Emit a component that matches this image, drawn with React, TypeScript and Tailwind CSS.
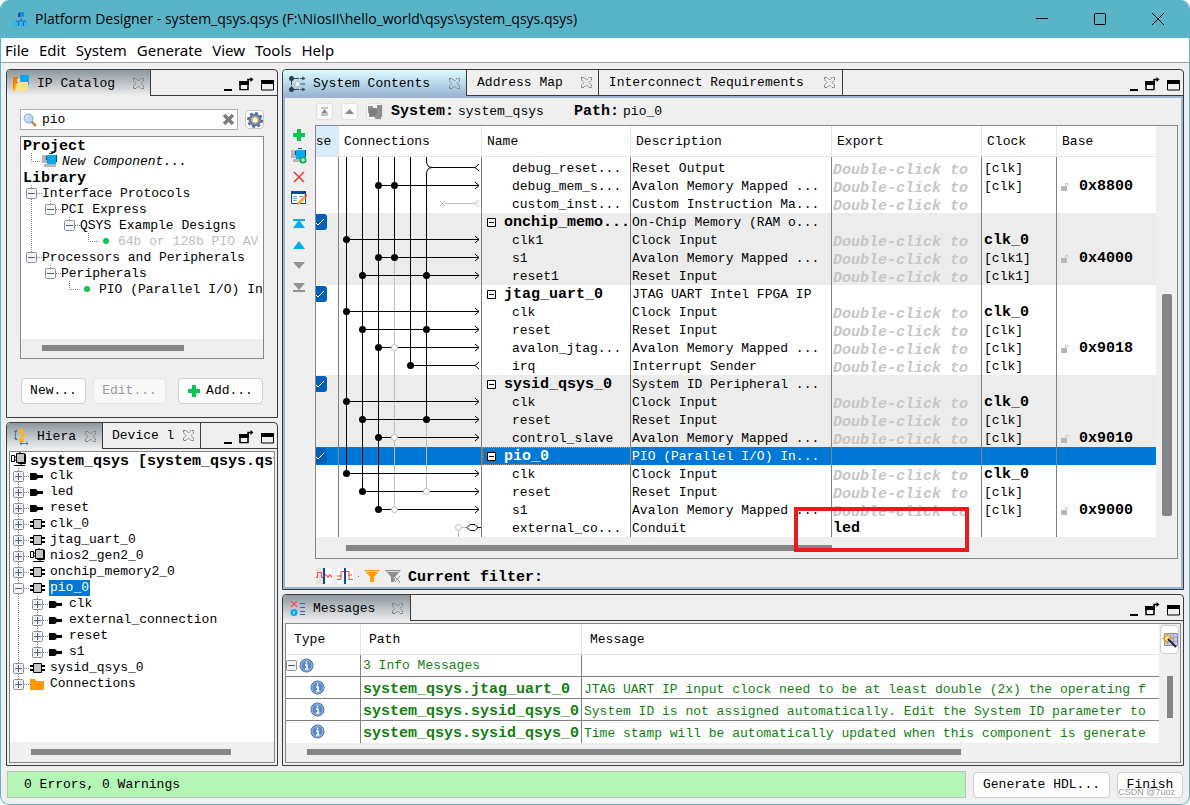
import { useState } from "react";
import type { ReactNode } from "react";
import clsx from "clsx";

/* ---------- icons ---------- */

const Svg = ({ w = 16, h = 16, children }: { w?: number; h?: number; children: ReactNode }) => (
    <svg width={w} height={h} viewBox={`0 0 ${w} ${h}`} fill="none" className="block shrink-0" aria-hidden="true">
        {children}
    </svg>
)

const AppIcon = () => (
    <Svg>
        <path d="M8 7v3M3.500 12v-2h9v2" stroke="#1565c0" />
        <path d="M6 1h5v5H6z" fill="#1e88e5" />
        <path d="M5 3l2-2v5H5z" fill="#0d47a1" />
        <path d="M1 11h4v4H1zM7 11h3v4H7zM12 11h3v4h-3z" fill="#29b6f6" />
        <path d="M5 11h1v4H5zM10 11h1v4h-1z" fill="#1565c0" />
    </Svg>
)

const CatalogIcon = () => (
    <Svg w={17} h={17}>
        <path d="M0 2h5v12H0z" fill="#f57c00" />
        <path d="M4 4l3-1 1 5-3 1z" fill="#e0e0e0" />
        <path d="M7 0h9v10H7z" fill="#03a9f4" />
        <path d="M2 8h4l1-1h8v9H1z" fill="#ffe08a" />
        <path d="M0 16l2-8h2L2 16z" fill="#ffb300" />
    </Svg>
)

const HierIcon = () => (
    <Svg>
        <path d="M3.500 1.500h-2v9h2M0 3l1.500-1.500L3 3M0 9l1.500 1.500L3 9" stroke="#5c7a99" />
        <path d="M5 0h4v4H5zM7 4h4v4H7zM5 9h5v4H5z" fill="#f9b515" />
        <path d="M6 14.500h8M8 12.500l-2 2 2 1.500M12 12.500l2 2-2 1.500" stroke="#5c7a99" />
    </Svg>
)

const SystemIcon = () => (
    <Svg w={17}>
        <path d="M2.500 2v12M3 2.500h13M3 13.500h13M11 8h5" stroke="#34495e" strokeDasharray="7 1" />
        <path d="M8.500 3v10" stroke="#b0bccb" />
        <circle cx="2.500" cy="2.500" r="2.500" fill="#2c3e50" />
        <circle cx="2.500" cy="13.500" r="2.500" fill="#2c3e50" />
        <circle cx="8.500" cy="8" r="2.500" fill="#fff" stroke="#b0bccb" />
        <path d="M13 1l3 1.500-3 1.500M13 12l3 1.500-3 1.500" stroke="#34495e" />
    </Svg>
)

const MessagesIcon = () => (
    <Svg>
        <path d="M1 0l6 6M7 0L1 6" stroke="#ef5350" strokeWidth="1.200" />
        <circle cx="4" cy="11.500" r="3.500" fill="#03a9f4" />
        <path d="M4 10v3" stroke="#fff" />
        <path d="M10 2.500h5M10 6.500h5M10 10.500h5M10 13.500h5" stroke="#3f5fa8" />
    </Svg>
)

const TabClose = () => (
    <Svg w={11} h={11}>
        <path
            d="M.5 .5h2.500l2.500 2.500L8 .5h2.500V3L8 5.500l2.500 2.500v2.500H8L5.500 8 3 10.500H.5V8L3 5.500.5 3z"
            stroke="#777"
            strokeDasharray="2 .6"
        />
    </Svg>
)

const FloatIcon = () => (
    <Svg w={15} h={14}>
        <path d="M0 4h10v4H0z" fill="#000" />
        <path d="M1 5h8v7.500H1z" stroke="#000" strokeWidth="1.500" />
        <path d="M2 8h6v4H2z" fill="#efefef" />
        <path d="M9 5V2.500h4" stroke="#000" strokeWidth="1.500" />
        <path d="M11.500 0l3 2.500-3 2.500z" fill="#000" />
    </Svg>
)

const MaxIcon = () => (
    <Svg w={13} h={11}>
        <path d="M.5 1h12v9H.5z" stroke="#000" />
        <path d="M0 0h13v4H0z" fill="#000" />
    </Svg>
)

const SearchIcon = () => (
    <Svg w={14} h={14}>
        <path d="M8 8l5 5" stroke="#c98b4a" strokeWidth="2.500" />
        <circle cx="5.500" cy="5.500" r="4.500" fill="#bcd9f5" stroke="#7fa8d6" />
        <path d="M3 5.500C3 4 4 3 5.500 3" stroke="#fff" />
    </Svg>
)

const GearIcon = () => (
    <Svg>
        <circle cx="8" cy="8" r="5" stroke="#5f7fa8" strokeWidth="3" />
        <circle cx="8" cy="8" r="7" stroke="#4f6d94" strokeWidth="2" strokeDasharray="2.800 2.700" />
        <circle cx="8" cy="8" r="3" fill="#fff" stroke="#f0a030" />
    </Svg>
)

const PlusIcon = () => (
    <Svg w={12} h={12}>
        <path d="M4 0h4v4h4v4H8v4H4V8H0V4h4z" fill="#0bc552" />
    </Svg>
)

const AddComponentIcon = ({ plain = false }: { plain?: boolean }) => (
    <Svg>
        <path d="M0 2h6v8H0zM2 11h12v3H2z" fill="#b5b5b5" />
        <path d="M5 2h9v9H5z" fill="#03a9f4" />
        <path d="M4.500 3v4M7 .5h4M14.500 2v7" stroke="#0d47a1" />
        {!plain && <circle cx="12" cy="12" r="3.500" fill="#0bb04f" />}
        {!plain && <path d="M12 10v4M10 12h4" stroke="#fff" />}
    </Svg>
)

const EditIcon = () => (
    <Svg>
        <path d="M.5 1.500h14v12H.5z" fill="#fff" stroke="#0d47a1" />
        <path d="M0 1h15v3H0z" fill="#0d47a1" />
        <path d="M2 6.500h4M2 8.500h4M2 10.500h4M8 6.500h4" stroke="#64a5e8" />
        <path d="M7 12l6-6 2 2-6 6-3 1z" fill="#f9a825" />
        <path d="M13 5l2-1 1 1-1 3z" fill="#e53935" />
    </Svg>
)

const Arrow = ({ color, down = false, bar = false }: { color: string; down?: boolean; bar?: boolean }) => (
    <Svg w={12} h={10}>
        <path d={down ? "M0 1h12L6 8z" : "M6 1l6 8H0z"} fill={color} />
        {bar && <path d={down ? "M0 9h12" : "M0 1h12"} stroke={color} strokeWidth="2" />}
    </Svg>
)

const SystemGray = () => (
    <Svg>
        <path d="M1 2h5v2h4V1h5v12h-1v2H9l-2-2H2V9H1z" fill="#8f8f8f" />
        <circle cx="6" cy="8" r="4" fill="#7d7d7d" />
    </Svg>
)

const Plug = () => (
    <Svg w={13} h={16}>
        <path d="M0 5h6l2 2h5v3H8l-2 2H0z" fill="#000" />
    </Svg>
)

const Chip = () => (
    <Svg w={15}>
        <path d="M0 5h4v2H0zM0 9h4v2H0zM11 5h4v2h-4zM11 9h4v2h-4z" fill="#000" />
        <path d="M3.500 3.500h8v9h-8z" fill="#c4c4c4" stroke="#000" />
    </Svg>
)

const Subsystem = () => (
    <Svg w={15}>
        <path d="M5.500 1.500h8v9h-8z" fill="#c4c4c4" stroke="#000" />
        <path d="M.5 3.500h3v6h-3zM4 5h1M4 8h1M14.500 2v9.500H7M10 11v2M3 13.500h11M9 0v2" stroke="#000" />
    </Svg>
)

const Folder = () => (
    <Svg w={15}>
        <path d="M0 3h5l1 2h8v9H0z" fill="#ff9800" />
    </Svg>
)

const Dot = () => (
    <Svg w={11}>
        <circle cx="7" cy="8" r="3" fill="#0bc552" />
    </Svg>
)

const InfoIcon = () => (
    <Svg w={15} h={15}>
        <circle cx="7.500" cy="7.500" r="6.500" fill="#5b87c4" stroke="#3f69a8" />
        <circle cx="7.500" cy="7.500" r="5.500" stroke="#a9c2e4" />
        <path d="M7.500 3.500v2M6 7h2v4M6 11h3.500" stroke="#fff" strokeWidth="1.500" />
    </Svg>
)

const LockIcon = () => (
    <Svg w={10} h={10}>
        <path d="M1 4h6v5H1z" fill="#b8b8b8" />
        <path d="M5.500 4V1.500h2.500V4" stroke="#c8c8c8" />
    </Svg>
)

const Wave = ({ kind }: { kind: "one" | "two" }) => (
    <Svg>
        <path d="M0 0h16v16H0z" fill={kind === "one" ? "#e3e3df" : "#fff"} />
        {kind === "one" && <path d="M9 0h7v16H9z" fill="#fff" />}
        <path
            d={kind === "one" ? "M0 9.500h1.500v-5h4v5H8M9 7h2v2h2V7h2v2h1" : "M0 11.500h4v-8h3M0 8h5M9 3.500h3v8h4M11 7h4"}
            stroke="#f44336"
        />
        <path d="M8 0v16" stroke="#0d47a1" strokeWidth="2" />
    </Svg>
)

const Funnel = ({ color, off = false }: { color: string; off?: boolean }) => (
    <Svg>
        <path d="M0 2h16l-6 7v5H6V9z" fill={color} />
        <path d="M2 3.500h12" stroke="#d8d8d8" />
        {off && <path d="M9 9l6 5M15 7l-6 7" stroke="#efefef" />}
        {off && <path d="M10 9l5 5M15 8l-5 6" stroke="#8f8f8f" />}
    </Svg>
)

const WandIcon = () => (
    <Svg>
        <path d="M2.500 1.500h13v12h-13z" fill="#c9cbe8" stroke="#8388b5" />
        <path d="M3 5.500h12M3 9.500h12M11.500 2v11" stroke="#9a9dc4" />
        <path d="M5.500 1v11M.5 6.500h10M2 3l7 7M9 3l-7 7" stroke="#d99513" strokeWidth="1.500" />
        <circle cx="5.500" cy="6.500" r="2.500" fill="#ffe27a" />
        <path d="M6 7l8 8" stroke="#222" strokeWidth="2" />
    </Svg>
)

/* ---------- panel frame ---------- */

type Tab = { label: string; icon?: ReactNode; tone?: "blue" | "gray"; pad?: string }

function Tabs({ tabs, name }: { tabs: Tab[]; name: string }) {
    return (
        <div className="flex h-[26px] shrink-0">
            {tabs.map((tab) => (
                <div
                    key={tab.label}
                    className={clsx(
                        "flex items-center border-r border-[#3c3c3c]",
                        tab.pad,
                        !tab.tone && "border-b",
                        tab.tone === "blue" && "rounded-tl bg-linear-to-b from-[#dcfdff] to-[#9ab6d4]",
                        tab.tone === "gray" && "rounded-tl bg-linear-to-b from-[#8d979f] to-[#efefef]"
                    )}
                >
                    <button type="button" className="flex items-center gap-[7px] pt-px">
                        {tab.icon}
                        {tab.label}
                    </button>
                    <button type="button" aria-label={`Close ${tab.label}`}>
                        <TabClose />
                    </button>
                </div>
            ))}
            <div className="flex flex-1 items-end justify-end gap-[7px] border-b border-[#3c3c3c] pr-[3px] pb-1">
                <button type="button" aria-label={`Minimize ${name}`} className="h-[2px] w-2 bg-black" />
                <button type="button" aria-label={`Float ${name}`}>
                    <FloatIcon />
                </button>
                <button type="button" aria-label={`Maximize ${name}`}>
                    <MaxIcon />
                </button>
            </div>
        </div>
    )
}

/* ---------- trees ---------- */

// one character per 19px level: "|" line, "L" corner, "+" / "-" expander, "." empty
function Guides({ spec, last }: { spec: string; last?: boolean }) {
    return (
        <>
            {spec.split("").map((c, i) => {
                const box = c === "+" || c === "-"
                const end = i === spec.length - 1 && last
                return (
                    <svg key={i} width="19" height="16" viewBox="0 0 19 16" fill="none" className="block shrink-0" aria-hidden="true">
                        {c === "|" && <path d="M8.500 0v16" stroke="#808080" strokeDasharray="1 1" />}
                        {c === "L" && <path d="M8.500 0v8.500h10" stroke="#808080" strokeDasharray="1 1" />}
                        {box && <path d={end ? "M8.500 0v8" : "M8.500 0v16"} stroke="#808080" strokeDasharray="1 1" />}
                        {box && <path d="M14 8.500h5" stroke="#808080" strokeDasharray="1 1" />}
                        {box && <rect x="3.500" y="3.500" width="10" height="10" rx="1" fill="#f4f4f4" stroke="#919191" />}
                        {box && <path d={c === "+" ? "M5 8.500h7M8.500 5v7" : "M5 8.500h7"} stroke="#3f5fa8" />}
                    </svg>
                )
            })}
        </>
    )
}

const library = [
    { guides: "-", label: "Interface Protocols" },
    { guides: "|-", label: "PCI Express", last: true },
    { guides: "|.-", label: "QSYS Example Designs", last: true },
    { guides: "|..L", label: "64b or 128b PIO AV", leaf: true, dim: true },
    { guides: "-", label: "Processors and Peripherals", last: true },
    { guides: ".-", label: "Peripherals", last: true },
    { guides: "..L", label: "PIO (Parallel I/O) Intel", leaf: true },
]

function IpCatalog() {
    const [query, setQuery] = useState("pio")

    return (
        <section className="flex flex-col rounded-t border border-[#3c3c3c]">
            <Tabs name="IP Catalog" tabs={[{ label: "IP Catalog", icon: <CatalogIcon />, tone: "gray", pad: "gap-[18px] pl-[6px] pr-[6px]" }]} />
            <div className="flex items-center gap-[7px] pt-[13px] pr-[13px] pl-[13px]">
                <div className="flex h-[21px] min-w-0 flex-1 items-center border border-[#b0b0b0] bg-white px-[2px]">
                    <SearchIcon />
                    <input
                        aria-label="Search IP"
                        value={query}
                        onChange={(e) => setQuery(e.target.value)}
                        className="ml-[5px] min-w-0 flex-1 outline-none"
                    />
                    <button type="button" aria-label="Clear search" onClick={() => setQuery("")}>
                        <Svg w={13} h={13}>
                            <path d="M2 2l9 9M11 2l-9 9" stroke="#7d7d7d" strokeWidth="3.500" />
                        </Svg>
                    </button>
                </div>
                <button type="button" aria-label="Catalog settings" className="flex size-[19px] items-center justify-center rounded border border-[#c8c8c8] bg-white">
                    <GearIcon />
                </button>
            </div>
            <div className="mx-[13px] mt-[6px] overflow-hidden border border-[#828790] bg-white whitespace-nowrap">
                <div className="h-4 overflow-hidden pt-[2px] pl-[2px] text-[15px] leading-4 font-bold">Project</div>
                <div className="flex h-4 items-center overflow-hidden pl-[2px] leading-[18px] italic">
                    <Guides spec="L" />
                    <AddComponentIcon plain />
                    <span className="pt-px pl-1">New Component...</span>
                </div>
                <div className="h-4 overflow-hidden pt-[2px] pl-[2px] text-[15px] leading-4 font-bold">Library</div>
                {library.map((item) => (
                    <div key={item.label} className={clsx("flex h-4 pl-[2px] leading-[18px]", item.dim && "text-[#bdbdbd]")}>
                        <Guides spec={item.guides} last={item.last} />
                        {item.leaf && <Dot />}
                        <span className={clsx(item.leaf && "pl-[8px]")}>{item.label}</span>
                    </div>
                ))}
                <div className="mt-[42px] bg-[#efefef] pt-[6px] pb-[7px]">
                    <div className="ml-[21px] h-[6px] w-[142px] bg-[#858585]" />
                </div>
            </div>
            <div className="flex gap-[7px] px-[14px] pt-[19px] pb-[13px]">
                <button type="button" className="h-[26px] w-[65px] rounded border border-[#d0d0d0] bg-[#fdfdfd]">New...</button>
                <button type="button" disabled className="h-[26px] w-[73px] rounded border border-[#e5e5e5] bg-[#f8f8f8] text-[#9a9a9a]">Edit...</button>
                <button type="button" className="ml-auto flex h-[26px] w-[85px] items-center justify-center gap-[6px] rounded border border-[#d0d0d0] bg-[#fdfdfd]">
                    <PlusIcon />
                    Add...
                </button>
            </div>
        </section>
    )
}

const hierarchy = [
    { guides: "+", label: "clk", icon: <Plug /> },
    { guides: "+", label: "led", icon: <Plug /> },
    { guides: "+", label: "reset", icon: <Plug /> },
    { guides: "+", label: "clk_0", icon: <Chip /> },
    { guides: "+", label: "jtag_uart_0", icon: <Chip /> },
    { guides: "+", label: "nios2_gen2_0", icon: <Subsystem /> },
    { guides: "+", label: "onchip_memory2_0", icon: <Chip /> },
    { guides: "-", label: "pio_0", icon: <Chip />, selected: true },
    { guides: "|+", label: "clk", icon: <Plug /> },
    { guides: "|+", label: "external_connection", icon: <Plug /> },
    { guides: "|+", label: "reset", icon: <Plug /> },
    { guides: "|+", label: "s1", icon: <Plug />, last: true },
    { guides: "+", label: "sysid_qsys_0", icon: <Chip /> },
    { guides: "+", label: "Connections", icon: <Folder />, last: true },
]

function Hierarchy() {
    return (
        <section className="flex flex-1 flex-col rounded-t border border-[#3c3c3c]">
            <Tabs
                name="Hierarchy"
                tabs={[
                    { label: "Hiera", icon: <HierIcon />, tone: "gray", pad: "gap-[9px] pl-[7px] pr-[6px]" },
                    { label: "Device l", pad: "gap-[9px] pl-[9px] pr-[6px]" },
                ]}
            />
            <div className="m-[2px] flex flex-1 flex-col overflow-hidden border border-[#828790] bg-white whitespace-nowrap">
                <div className="flex h-4 overflow-hidden pl-px text-[15px] leading-4 font-bold">
                    <Subsystem />
                    <span className="pt-[2px] pl-1">system_qsys [system_qsys.qsys]</span>
                </div>
                {hierarchy.map((item, i) => (
                    <div key={i} className="flex h-4 leading-4">
                        <Guides spec={item.guides} last={item.last} />
                        <span className="w-5 pl-px">{item.icon}</span>
                        <span className={clsx("px-px", item.selected && "bg-[#0078d7] text-white")}>{item.label}</span>
                    </div>
                ))}
                <div className="mt-auto bg-[#efefef] py-[7px]">
                    <div className="ml-[21px] h-[6px] w-[200px] bg-[#858585]" />
                </div>
            </div>
        </section>
    )
}

/* ---------- system contents ---------- */

type Row = {
    name: string
    desc: string
    head?: boolean
    shade?: boolean
    selected?: boolean
    // lane indexes
    from?: number
    dots?: number[]
    open?: number[]
    out?: boolean
    clock?: string
    base?: string
    exported?: string
    special?: "corner" | "custom" | "conduit"
}

const rows: Row[] = [
    { name: "debug_reset...", desc: "Reset Output", clock: "[clk]", special: "corner" },
    { name: "debug_mem_s...", desc: "Avalon Memory Mapped ...", from: 2, dots: [2, 3], clock: "[clk]", base: "0x8800" },
    { name: "custom_inst...", desc: "Custom Instruction Ma...", special: "custom" },
    { name: "onchip_memo...", desc: "On-Chip Memory (RAM o...", head: true, shade: true },
    { name: "clk1", desc: "Clock Input", from: 0, dots: [0], clock: "clk_0", shade: true },
    { name: "s1", desc: "Avalon Memory Mapped ...", from: 2, dots: [2, 3], clock: "[clk1]", base: "0x4000", shade: true },
    { name: "reset1", desc: "Reset Input", from: 1, dots: [1, 5], clock: "[clk1]", shade: true },
    { name: "jtag_uart_0", desc: "JTAG UART Intel FPGA IP", head: true },
    { name: "clk", desc: "Clock Input", from: 0, dots: [0], clock: "clk_0" },
    { name: "reset", desc: "Reset Input", from: 1, dots: [1, 5], clock: "[clk]" },
    { name: "avalon_jtag...", desc: "Avalon Memory Mapped ...", from: 2, dots: [2], open: [3], clock: "[clk]", base: "0x9018" },
    { name: "irq", desc: "Interrupt Sender", from: 4, dots: [4], out: true, clock: "[clk]" },
    { name: "sysid_qsys_0", desc: "System ID Peripheral ...", head: true, shade: true },
    { name: "clk", desc: "Clock Input", from: 0, dots: [0], clock: "clk_0", shade: true },
    { name: "reset", desc: "Reset Input", from: 1, dots: [1, 5], clock: "[clk]", shade: true },
    { name: "control_slave", desc: "Avalon Memory Mapped ...", from: 2, dots: [2], open: [3], clock: "[clk]", base: "0x9010", shade: true },
    { name: "pio_0", desc: "PIO (Parallel I/O) In...", head: true, selected: true },
    { name: "clk", desc: "Clock Input", from: 0, dots: [0], clock: "clk_0" },
    { name: "reset", desc: "Reset Input", from: 1, dots: [1], open: [5], clock: "[clk]" },
    { name: "s1", desc: "Avalon Memory Mapped ...", from: 2, dots: [2], open: [3], clock: "[clk]", base: "0x9000" },
    { name: "external_co...", desc: "Conduit", exported: "led", special: "conduit" },
]

// last row reached by the black part of each lane, then by the gray part
const lanes = [
    { black: 17, gray: 17 },
    { black: 18, gray: 18 },
    { black: 19, gray: 19 },
    { black: 5, gray: 19 },
    { black: 11, gray: 11 },
    { black: 14, gray: 18 },
]

const laneX = (lane: number) => 7.5 + lane * 16

function Wires({ row, index }: { row: Row; index: number }) {
    return (
        <svg width="142" height="18" viewBox="0 0 142 18" fill="none" className="block" aria-hidden="true">
            {lanes.map((lane, i) => {
                const x = laneX(i)
                if (row.special === "corner" && i === 5) return null
                return (
                    <g key={i}>
                        {index > lane.black && index <= lane.gray && (
                            <path d={`M${x} 0V${index === lane.gray ? 9 : 18}`} stroke="#bdbdbd" />
                        )}
                        {index === lane.black && lane.gray > lane.black && <path d={`M${x} 9V18`} stroke="#bdbdbd" />}
                        {index <= lane.black && <path d={`M${x} 0V${index === lane.black ? 9 : 18}`} stroke="#000" />}
                    </g>
                )
            })}
            {row.from !== undefined && <path d={`M${laneX(row.from)} 8.500H${row.out ? 136 : 140}`} stroke="#000" />}
            {row.from !== undefined && <path d={row.out ? "M140 5l-4 3.500 4 3.500" : "M136 5l4 3.500-4 3.500"} stroke="#000" />}
            {row.dots?.map((d) => <circle key={d} cx={laneX(d)} cy="8.500" r="3.500" fill="#000" />)}
            {row.open?.map((d) => <circle key={d} cx={laneX(d)} cy="8.500" r="3" fill="#fff" stroke="#bdbdbd" />)}
            {row.special === "corner" && (
                <path d="M87.500 0v2q0 6.500 6 6.500H136M87.500 18v-3q0-6.500 6-6.500M140 5l-4 3.500 4 3.500" stroke="#000" />
            )}
            {row.special === "custom" && <path d="M101 6l5 5M106 6l-5 5M106 8.500h30M140 5l-4 3.500 4 3.500" stroke="#bdbdbd" />}
            {row.special === "conduit" && (
                <>
                    <path d="M119.500 9v9M122 8.500h6" stroke="#bdbdbd" />
                    <circle cx="119.500" cy="8.500" r="3" fill="#fff" stroke="#bdbdbd" />
                    <path d="M128 8.500l3-3h5l3 3-3 3h-5zM138 8.500h4" stroke="#000" />
                </>
            )}
        </svg>
    )
}

function ContentsRow({ row, index }: { row: Row; index: number }) {
    const plain = "h-[18px] border-r border-[#808080] p-0 overflow-hidden"
    const cell = "h-[18px] border-r border-[#808080] p-0 pt-[2px] overflow-hidden"
    return (
        <tr className={clsx(row.shade && "bg-[#ececec]", row.selected && "bg-[#0078d7] text-white")}>
            <td className={plain}>
                {row.head && (
                    <span className="-ml-[5px] grid size-4">
                        <input
                            type="checkbox"
                            defaultChecked
                            aria-label={`Use ${row.name}`}
                            className="col-start-1 row-start-1 size-4 appearance-none rounded-[3px] bg-[#005fb8]"
                        />
                        <svg width="16" height="16" viewBox="0 0 16 16" fill="none" className="pointer-events-none col-start-1 row-start-1" aria-hidden="true">
                            <path d="M4 8l3 3 6-6" stroke="#fff" />
                        </svg>
                    </span>
                )}
            </td>
            <td className={plain}>
                <Wires row={row} index={index} />
            </td>
            <td className={clsx(cell, row.selected && "outline-1 -outline-offset-1 outline-dotted outline-[#ff8728]")}>
                {row.head ? (
                    <div className="flex items-center gap-[7px] pl-[5px] text-[15px] font-bold">
                        <Svg w={10} h={10}>
                            <path d="M.5 .5h8v8h-8z" fill="#fff" stroke="#000" />
                            <path d="M2 4.500h5" stroke="#000" />
                        </Svg>
                        {row.name}
                    </div>
                ) : (
                    <div className="pl-[30px]">{row.name}</div>
                )}
            </td>
            <td className={clsx(cell, "pl-px")}>{row.desc}</td>
            <td className="relative h-[18px] border-r border-[#808080] p-0 pt-[2px] pl-px text-[15px] font-bold">
                {row.exported}
                {row.exported && <span className="pointer-events-none absolute -top-[12px] -left-[38px] h-[45px] w-[175px] border-4 border-[#e81c1c]" />}
                {!row.head && !row.exported && (
                    <span className="block h-4 overflow-hidden pt-px leading-[18px] text-[#c6c6c6] italic">Double-click to</span>
                )}
            </td>
            <td className={clsx(cell, "pl-[2px]", row.clock === "clk_0" && "text-[15px] font-bold")}>{row.clock}</td>
            <td className="h-[18px] overflow-hidden p-0 pt-[2px]">
                {row.base && (
                    <div className="flex items-center gap-[9px] pl-[3px] text-[15px] font-bold">
                        <LockIcon />
                        {row.base}
                    </div>
                )}
            </td>
        </tr>
    )
}

const SmallBtn = ({ label, children }: { label: string; children: ReactNode }) => (
    <button type="button" aria-label={label} className="flex size-[17px] items-center justify-center rounded-[3px] border border-[#e0e0e0] bg-[#fafafa]">
        {children}
    </button>
)

function SystemContents() {
    const th = "h-[31px] overflow-hidden border-r border-b border-[#e5e5e5] bg-white p-0 pt-[2px] pl-[5px] text-left font-normal"
    return (
        <section className="flex flex-1 flex-col rounded-t border border-[#3c3c3c]">
            <Tabs
                name="System Contents"
                tabs={[
                    { label: "System Contents", icon: <SystemIcon />, tone: "blue", pad: "gap-[19px] pl-[6px] pr-[6px]" },
                    { label: "Address Map", pad: "gap-[18px] pl-[10px] pr-[6px]" },
                    { label: "Interconnect Requirements", pad: "gap-5 pl-[10px] pr-[7px]" },
                ]}
            />
            <div className="flex flex-1 border-2 border-[#9ab4d2]">
                <div className="flex w-[30px] shrink-0 flex-col items-center pt-[26px] pr-[2px]">
                    <button type="button" aria-label="Add" className="flex h-[21px] items-center"><PlusIcon /></button>
                    <button type="button" aria-label="Add component" className="flex h-[21px] items-center"><AddComponentIcon /></button>
                    <button type="button" aria-label="Remove" className="flex h-[21px] items-center">
                        <Svg w={12} h={12}>
                            <path d="M1 1l10 10M11 1L1 11" stroke="#e53935" strokeWidth="1.500" />
                        </Svg>
                    </button>
                    <button type="button" aria-label="Edit" className="mb-[5px] flex h-[21px] items-center"><EditIcon /></button>
                    <button type="button" aria-label="Move to top" className="flex h-[21px] items-center"><Arrow color="#03a9f4" bar /></button>
                    <button type="button" aria-label="Move up" className="flex h-[21px] items-center"><Arrow color="#03a9f4" /></button>
                    <button type="button" aria-label="Move down" className="flex h-[21px] items-center"><Arrow color="#949494" down /></button>
                    <button type="button" aria-label="Move to bottom" className="flex h-[21px] items-center"><Arrow color="#949494" down bar /></button>
                </div>
                <div className="flex min-w-0 flex-1 flex-col pr-[3px]">
                    <div className="flex h-[27px] items-center gap-2 pl-px">
                        <SmallBtn label="Go to top">
                            <Svg w={9} h={9}>
                                <path d="M1 1h7M1 8h7" stroke="#8a8a8a" />
                                <path d="M4.500 2L8 6.500H1z" fill="#8a8a8a" />
                            </Svg>
                        </SmallBtn>
                        <SmallBtn label="Go up">
                            <Svg w={9} h={9}>
                                <path d="M4.500 2L9 7H0z" fill="#8a8a8a" />
                            </Svg>
                        </SmallBtn>
                        <SmallBtn label="Open system"><SystemGray /></SmallBtn>
                        <b className="text-[15px]">System:</b>
                        <span className="-ml-1 w-[108px]">system_qsys</span>
                        <b className="text-[15px]">Path:</b>
                        <span className="-ml-1">pio_0</span>
                    </div>
                    <div className="flex border border-b-0 border-[#828790]">
                        <table className="min-w-0 flex-1 table-fixed border-separate border-spacing-0 bg-white leading-4 whitespace-nowrap">
                            <colgroup>
                                <col className="w-[23px]" />
                                <col className="w-[143px]" />
                                <col className="w-[149px]" />
                                <col className="w-[201px]" />
                                <col className="w-[150px]" />
                                <col className="w-[75px]" />
                                <col />
                            </colgroup>
                            <thead>
                                <tr>
                                    <th className="h-[31px] overflow-hidden border-r border-b border-[#e5e5e5] bg-[#d9ebf9] p-0 pt-[2px] text-left font-normal">
                                        <span className="-ml-2">Use</span>
                                    </th>
                                    <th className={th}>Connections</th>
                                    <th className={th}>Name</th>
                                    <th className={th}>Description</th>
                                    <th className={th}>Export</th>
                                    <th className={th}>Clock</th>
                                    <th className={clsx(th, "border-r-0")}>Base</th>
                                </tr>
                            </thead>
                            <tbody>
                                <tr aria-hidden="true">
                                    <td className="h-[2px] border-r border-[#808080] p-0" />
                                    <td className="h-[2px] border-r border-[#808080] p-0">
                                        <svg width="142" height="2" className="block">
                                            <path d="M7.500 0v2M23.500 0v2M39.500 0v2M55.500 0v2M71.500 0v2M87.500 0v2" stroke="#000" />
                                        </svg>
                                    </td>
                                    <td className="h-[2px] border-r border-[#808080] p-0" />
                                    <td className="h-[2px] border-r border-[#808080] p-0" />
                                    <td className="h-[2px] border-r border-[#808080] p-0" />
                                    <td className="h-[2px] border-r border-[#808080] p-0" />
                                    <td className="h-[2px] p-0" />
                                </tr>
                                {rows.map((row, i) => <ContentsRow key={i} row={row} index={i} />)}
                            </tbody>
                        </table>
                        <div className="w-[21px] shrink-0 pt-[168px] pl-[6px]">
                            <div className="h-[222px] w-[10px] rounded-[2px] bg-[#858585]" />
                        </div>
                    </div>
                    <div className="border border-t-0 border-[#828790] pt-[8px] pb-[7px]">
                        <div className="ml-[30px] h-[6px] w-[486px] bg-[#858585]" />
                    </div>
                    <div className="flex items-center gap-[5px] pt-[6px] pl-px">
                        <button type="button" aria-label="Show clock domains"><Wave kind="one" /></button>
                        <button type="button" aria-label="Show reset domains"><Wave kind="two" /></button>
                        <span className="size-px bg-[#808080]" />
                        <button type="button" aria-label="Filter"><Funnel color="#ff9d0a" /></button>
                        <button type="button" aria-label="Clear filter"><Funnel color="#8f8f8f" off /></button>
                        <b className="pt-1 pl-[2px] text-[15px] leading-[18px]">Current filter:</b>
                    </div>
                </div>
            </div>
        </section>
    )
}

/* ---------- messages ---------- */

const messages = [
    { path: "system_qsys.jtag_uart_0", text: "JTAG UART IP input clock need to be at least double (2x) the operating f" },
    { path: "system_qsys.sysid_qsys_0", text: "System ID is not assigned automatically. Edit the System ID parameter to" },
    { path: "system_qsys.sysid_qsys_0", text: "Time stamp will be automatically updated when this component is generate" },
]

function Messages() {
    const th = "h-[31px] border-r border-b border-[#e5e5e5] p-0 pt-[2px] pl-[8px] text-left font-normal"
    const td = "h-[22px] overflow-hidden border-[#808080] p-0"
    return (
        <section className="flex flex-col rounded-t border border-[#3c3c3c]">
            <Tabs name="Messages" tabs={[{ label: "Messages", icon: <MessagesIcon />, tone: "gray", pad: "gap-[17px] pl-[7px] pr-[7px]" }]} />
            <div className="m-[2px] border border-[#828790]">
                <div className="flex">
                    <table className="min-w-0 flex-1 table-fixed border-separate border-spacing-0 bg-white whitespace-nowrap">
                        <colgroup>
                            <col className="w-[75px]" />
                            <col className="w-[221px]" />
                            <col />
                        </colgroup>
                        <thead>
                            <tr>
                                <th className={th}>Type</th>
                                <th className={th}>Path</th>
                                <th className={clsx(th, "border-r-0")}>Message</th>
                            </tr>
                        </thead>
                        <tbody className="text-[#108010]">
                            <tr>
                                <td className={clsx(td, "border-r border-b")}>
                                    <div className="flex items-center gap-[2px]">
                                        <Svg w={11} h={11}>
                                            <rect x=".5" y=".5" width="10" height="10" rx="1" fill="#f4f4f4" stroke="#919191" />
                                            <path d="M2 5.500h7" stroke="#3f5fa8" />
                                        </Svg>
                                        <InfoIcon />
                                    </div>
                                </td>
                                <td className={clsx(td, "border-r border-b pl-[2px]")}>3 Info Messages</td>
                                <td className={clsx(td, "border-b")} />
                            </tr>
                            {messages.map((m, i) => {
                                const line = i < messages.length - 1 && "border-b"
                                return (
                                    <tr key={i} className="align-top">
                                        <td className={clsx(td, "border-r pt-[3px] pl-6", line)}><InfoIcon /></td>
                                        <td className={clsx(td, "border-r pt-1 pl-[2px] text-[15px] leading-[17px] font-bold", line)}>{m.path}</td>
                                        <td className={clsx(td, "pt-1 pl-[2px] leading-[17px]", line)}>{m.text}</td>
                                    </tr>
                                )
                            })}
                        </tbody>
                    </table>
                    <div className="w-[21px] shrink-0">
                        <button type="button" aria-label="Message options" className="mt-px ml-px flex h-[29px] w-[19px] items-center justify-center rounded border border-[#d0d0d0] bg-[#fdfdfd]">
                            <WandIcon />
                        </button>
                        <div className="mt-[22px] ml-[8px] h-[42px] w-[6px] bg-[#858585]" />
                    </div>
                </div>
                <div className="pt-[6px] pb-[7px]">
                    <div className="ml-[21px] h-[6px] w-[654px] bg-[#858585]" />
                </div>
            </div>
        </section>
    )
}

/* ---------- window ---------- */

const menus = ["File", "Edit", "System", "Generate", "View", "Tools", "Help"]

export default function App() {
    return (
        <div className="flex min-h-screen flex-col overflow-hidden rounded-[9px] border-r border-b border-l border-[#5ab4c8] bg-[#efefef] font-['Liberation_Mono',monospace] text-[13px] leading-4 text-black">
            <header className="flex h-[38px] items-center bg-[#5ab4c8] pl-3 font-['Open_Sans',sans-serif]">
                <AppIcon />
                <h1 className="flex-1 pl-[6px] text-[14px]">Platform Designer - system_qsys.qsys (F:\NiosII\hello_world\qsys\system_qsys.qsys)</h1>
                <div className="flex gap-[46px] pr-[25px]">
                    <button type="button" aria-label="Minimize">
                        <Svg w={12} h={12}><path d="M0 5.500h12" stroke="#000" /></Svg>
                    </button>
                    <button type="button" aria-label="Maximize">
                        <Svg w={12} h={12}><rect x=".5" y=".5" width="11" height="11" rx="1" stroke="#000" /></Svg>
                    </button>
                    <button type="button" aria-label="Close">
                        <Svg w={12} h={12}><path d="M0 0l12 12M12 0L0 12" stroke="#000" /></Svg>
                    </button>
                </div>
            </header>
            <nav className="flex h-[25px] items-center gap-[10px] border-b border-[#a0a0a0] bg-white pl-1 font-['Noto_Sans',sans-serif] text-[15px]">
                {menus.map((m) => <button key={m} type="button">{m}</button>)}
            </nav>
            <main className="flex flex-1 gap-1 px-[5px] pt-[6px]">
                <div className="flex w-[272px] shrink-0 flex-col gap-1">
                    <IpCatalog />
                    <Hierarchy />
                </div>
                <div className="flex min-w-0 flex-1 flex-col gap-1">
                    <SystemContents />
                    <Messages />
                </div>
            </main>
            <footer className="relative flex items-center gap-[7px] px-[6px] pt-[5px] pb-[6px]">
                <div className="flex h-[27px] flex-1 items-center border border-[#b8c4b8] bg-[#b5f5b5] pl-4">0 Errors, 0 Warnings</div>
                <button type="button" className="h-[26px] w-[137px] rounded border border-[#d0d0d0] bg-[#fdfdfd]">Generate HDL...</button>
                <button type="button" className="h-[26px] w-[66px] rounded border border-[#d0d0d0] bg-[#fdfdfd]">Finish</button>
                <span className="pointer-events-none absolute right-[14px] bottom-1 font-['Liberation_Sans',sans-serif] text-[9px] text-[#9a9a9a]">CSDN @7uoz</span>
            </footer>
        </div>
    )
}
